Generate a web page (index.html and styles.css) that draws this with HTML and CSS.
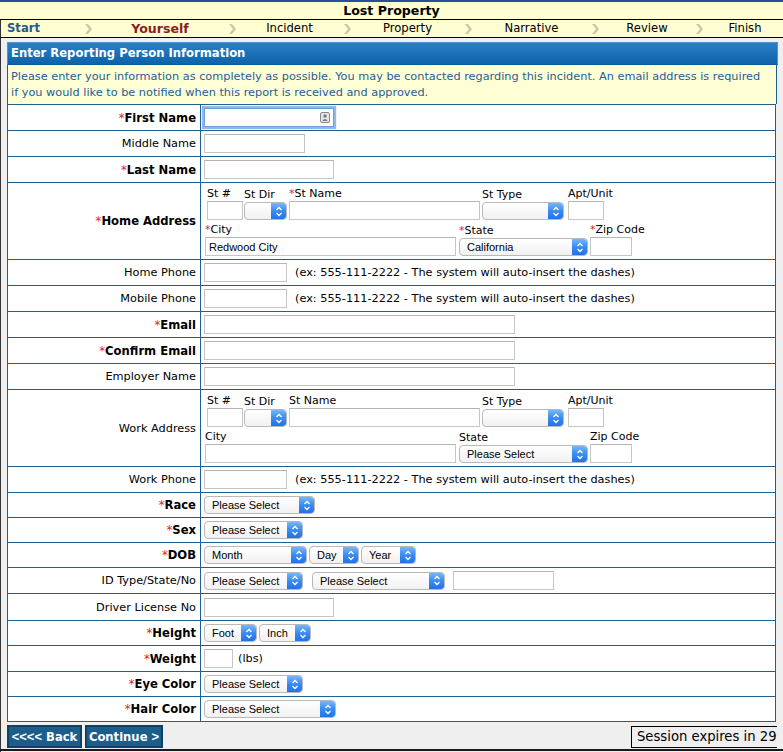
FILE: index.html
```html
<!DOCTYPE html>
<html>
<head>
<meta charset="utf-8">
<title>Lost Property</title>
<link rel="stylesheet" href="styles.css">
</head>
<body>
<div class="top">
  <div class="title">Lost Property</div>
  <div class="steps">
    <div class="step c-start s-done">Start</div>
    <div class="arr"><svg width="7" height="10" viewBox="0 0 7 10"><polygon points="0,0 3,0 7,5 3,10 0,10 4,5" fill="#c9c9a6"/></svg></div>
    <div class="step c-your s-cur">Yourself</div>
    <div class="arr"><svg width="7" height="10" viewBox="0 0 7 10"><polygon points="0,0 3,0 7,5 3,10 0,10 4,5" fill="#c9c9a6"/></svg></div>
    <div class="step c-inc">Incident</div>
    <div class="arr"><svg width="7" height="10" viewBox="0 0 7 10"><polygon points="0,0 3,0 7,5 3,10 0,10 4,5" fill="#c9c9a6"/></svg></div>
    <div class="step c-prop">Property</div>
    <div class="arr"><svg width="7" height="10" viewBox="0 0 7 10"><polygon points="0,0 3,0 7,5 3,10 0,10 4,5" fill="#c9c9a6"/></svg></div>
    <div class="step c-narr">Narrative</div>
    <div class="arr"><svg width="7" height="10" viewBox="0 0 7 10"><polygon points="0,0 3,0 7,5 3,10 0,10 4,5" fill="#c9c9a6"/></svg></div>
    <div class="step c-rev">Review</div>
    <div class="arr"><svg width="7" height="10" viewBox="0 0 7 10"><polygon points="0,0 3,0 7,5 3,10 0,10 4,5" fill="#c9c9a6"/></svg></div>
    <div class="step c-fin">Finish</div>
  </div>
</div>

<div class="main">
  <div class="phead">Enter Reporting Person Information</div>
  <div class="info">Please enter your information as completely as possible. You may be contacted regarding this incident. An email address is required<br>if you would like to be notified when this report is received and approved.</div>

  <table class="form">
    <colgroup><col class="col-l"><col class="col-v"></colgroup>
    <tr>
      <td class="lbl b"><span class="req">*</span>First Name</td>
      <td class="val"><span class="fwrap"><input class="tx w130 focus" type="text"><span class="card"><svg width="10" height="11" viewBox="0 0 10 11"><rect x="0.5" y="0.5" width="9" height="10" rx="1.5" fill="#e6e6e6" stroke="#8a8a8a"/><circle cx="5" cy="4" r="1.7" fill="#7a7a7a"/><path d="M2.3 9 Q5 5.2 7.7 9 Z" fill="#7a7a7a"/></svg></span></span></td>
    </tr>
    <tr>
      <td class="lbl">Middle Name</td>
      <td class="val"><input class="tx w101" type="text"></td>
    </tr>
    <tr>
      <td class="lbl b"><span class="req">*</span>Last Name</td>
      <td class="val"><input class="tx w130" type="text"></td>
    </tr>
    <tr>
      <td class="lbl b"><span class="req">*</span>Home Address</td>
      <td class="val">
        <div class="addr">
          <div class="aline a1">
            <div class="fld"><label>St #</label><input class="tx w36" type="text"></div>
            <div class="fld g1"><label>St Dir</label><span class="sel w43"><select><option></option></select><span class="sbtn"><svg width="8" height="11" viewBox="0 0 8 11"><path d="M1.5 4 L4 1.5 L6.5 4 M1.5 7 L4 9.5 L6.5 7" fill="none" stroke="#fff" stroke-width="1.3"/></svg></span></span></div>
            <div class="fld g2"><label><span class="req">*</span>St Name</label><input class="tx w191" type="text"></div>
            <div class="fld g2"><label>St Type</label><span class="sel w82"><select><option></option></select><span class="sbtn"><svg width="8" height="11" viewBox="0 0 8 11"><path d="M1.5 4 L4 1.5 L6.5 4 M1.5 7 L4 9.5 L6.5 7" fill="none" stroke="#fff" stroke-width="1.3"/></svg></span></span></div>
            <div class="fld g4"><label>Apt/Unit</label><input class="tx w36" type="text"></div>
          </div>
          <div class="aline a2">
            <div class="fld"><label><span class="req">*</span>City</label><input class="tx w251" type="text" value="Redwood City"></div>
            <div class="fld g3"><label><span class="req">*</span>State</label><span class="sel w129"><select><option>California</option></select><span class="sbtn"><svg width="8" height="11" viewBox="0 0 8 11"><path d="M1.5 4 L4 1.5 L6.5 4 M1.5 7 L4 9.5 L6.5 7" fill="none" stroke="#fff" stroke-width="1.3"/></svg></span></span></div>
            <div class="fld g2"><label><span class="req">*</span>Zip Code</label><input class="tx w42" type="text"></div>
          </div>
        </div>
      </td>
    </tr>
    <tr>
      <td class="lbl">Home Phone</td>
      <td class="val"><input class="tx w83" type="text"><span class="hint">(ex: 555-111-2222 - The system will auto-insert the dashes)</span></td>
    </tr>
    <tr>
      <td class="lbl">Mobile Phone</td>
      <td class="val"><input class="tx w83" type="text"><span class="hint">(ex: 555-111-2222 - The system will auto-insert the dashes)</span></td>
    </tr>
    <tr>
      <td class="lbl b"><span class="req">*</span>Email</td>
      <td class="val"><input class="tx w311" type="text"></td>
    </tr>
    <tr>
      <td class="lbl b"><span class="req">*</span>Confirm Email</td>
      <td class="val"><input class="tx w311" type="text"></td>
    </tr>
    <tr>
      <td class="lbl">Employer Name</td>
      <td class="val"><input class="tx w311" type="text"></td>
    </tr>
    <tr>
      <td class="lbl">Work Address</td>
      <td class="val">
        <div class="addr">
          <div class="aline a1">
            <div class="fld"><label>St #</label><input class="tx w36" type="text"></div>
            <div class="fld g1"><label>St Dir</label><span class="sel w43"><select><option></option></select><span class="sbtn"><svg width="8" height="11" viewBox="0 0 8 11"><path d="M1.5 4 L4 1.5 L6.5 4 M1.5 7 L4 9.5 L6.5 7" fill="none" stroke="#fff" stroke-width="1.3"/></svg></span></span></div>
            <div class="fld g2"><label>St Name</label><input class="tx w191" type="text"></div>
            <div class="fld g2"><label>St Type</label><span class="sel w82"><select><option></option></select><span class="sbtn"><svg width="8" height="11" viewBox="0 0 8 11"><path d="M1.5 4 L4 1.5 L6.5 4 M1.5 7 L4 9.5 L6.5 7" fill="none" stroke="#fff" stroke-width="1.3"/></svg></span></span></div>
            <div class="fld g4"><label>Apt/Unit</label><input class="tx w36" type="text"></div>
          </div>
          <div class="aline a2">
            <div class="fld"><label>City</label><input class="tx w251" type="text"></div>
            <div class="fld g3"><label>State</label><span class="sel w129"><select><option>Please Select</option></select><span class="sbtn"><svg width="8" height="11" viewBox="0 0 8 11"><path d="M1.5 4 L4 1.5 L6.5 4 M1.5 7 L4 9.5 L6.5 7" fill="none" stroke="#fff" stroke-width="1.3"/></svg></span></span></div>
            <div class="fld g2"><label>Zip Code</label><input class="tx w42" type="text"></div>
          </div>
        </div>
      </td>
    </tr>
    <tr>
      <td class="lbl">Work Phone</td>
      <td class="val"><input class="tx w83" type="text"><span class="hint">(ex: 555-111-2222 - The system will auto-insert the dashes)</span></td>
    </tr>
    <tr class="srow">
      <td class="lbl b"><span class="req">*</span>Race</td>
      <td class="val"><span class="sel w111"><select><option>Please Select</option></select><span class="sbtn"><svg width="8" height="11" viewBox="0 0 8 11"><path d="M1.5 4 L4 1.5 L6.5 4 M1.5 7 L4 9.5 L6.5 7" fill="none" stroke="#fff" stroke-width="1.3"/></svg></span></span></td>
    </tr>
    <tr class="srow">
      <td class="lbl b"><span class="req">*</span>Sex</td>
      <td class="val"><span class="sel w99"><select><option>Please Select</option></select><span class="sbtn"><svg width="8" height="11" viewBox="0 0 8 11"><path d="M1.5 4 L4 1.5 L6.5 4 M1.5 7 L4 9.5 L6.5 7" fill="none" stroke="#fff" stroke-width="1.3"/></svg></span></span></td>
    </tr>
    <tr class="srow">
      <td class="lbl b"><span class="req">*</span>DOB</td>
      <td class="val"><span class="sel w103"><select><option>Month</option></select><span class="sbtn"><svg width="8" height="11" viewBox="0 0 8 11"><path d="M1.5 4 L4 1.5 L6.5 4 M1.5 7 L4 9.5 L6.5 7" fill="none" stroke="#fff" stroke-width="1.3"/></svg></span></span><span class="sel w50 g2"><select><option>Day</option></select><span class="sbtn"><svg width="8" height="11" viewBox="0 0 8 11"><path d="M1.5 4 L4 1.5 L6.5 4 M1.5 7 L4 9.5 L6.5 7" fill="none" stroke="#fff" stroke-width="1.3"/></svg></span></span><span class="sel w55 g2"><select><option>Year</option></select><span class="sbtn"><svg width="8" height="11" viewBox="0 0 8 11"><path d="M1.5 4 L4 1.5 L6.5 4 M1.5 7 L4 9.5 L6.5 7" fill="none" stroke="#fff" stroke-width="1.3"/></svg></span></span></td>
    </tr>
    <tr>
      <td class="lbl">ID Type/State/No</td>
      <td class="val"><span class="sel w99"><select><option>Please Select</option></select><span class="sbtn"><svg width="8" height="11" viewBox="0 0 8 11"><path d="M1.5 4 L4 1.5 L6.5 4 M1.5 7 L4 9.5 L6.5 7" fill="none" stroke="#fff" stroke-width="1.3"/></svg></span></span><span class="sel w133 g9"><select><option>Please Select</option></select><span class="sbtn"><svg width="8" height="11" viewBox="0 0 8 11"><path d="M1.5 4 L4 1.5 L6.5 4 M1.5 7 L4 9.5 L6.5 7" fill="none" stroke="#fff" stroke-width="1.3"/></svg></span></span><input class="tx w101 g8" type="text"></td>
    </tr>
    <tr class="r27">
      <td class="lbl">Driver License No</td>
      <td class="val"><input class="tx w130" type="text"></td>
    </tr>
    <tr class="srow">
      <td class="lbl b"><span class="req">*</span>Height</td>
      <td class="val"><span class="sel w53"><select><option>Foot</option></select><span class="sbtn"><svg width="8" height="11" viewBox="0 0 8 11"><path d="M1.5 4 L4 1.5 L6.5 4 M1.5 7 L4 9.5 L6.5 7" fill="none" stroke="#fff" stroke-width="1.3"/></svg></span></span><span class="sel w52 g2"><select><option>Inch</option></select><span class="sbtn"><svg width="8" height="11" viewBox="0 0 8 11"><path d="M1.5 4 L4 1.5 L6.5 4 M1.5 7 L4 9.5 L6.5 7" fill="none" stroke="#fff" stroke-width="1.3"/></svg></span></span></td>
    </tr>
    <tr>
      <td class="lbl b"><span class="req">*</span>Weight</td>
      <td class="val"><input class="tx w29" type="text"><span class="lbs">(lbs)</span></td>
    </tr>
    <tr class="srow">
      <td class="lbl b"><span class="req">*</span>Eye Color</td>
      <td class="val"><span class="sel w99"><select><option>Please Select</option></select><span class="sbtn"><svg width="8" height="11" viewBox="0 0 8 11"><path d="M1.5 4 L4 1.5 L6.5 4 M1.5 7 L4 9.5 L6.5 7" fill="none" stroke="#fff" stroke-width="1.3"/></svg></span></span></td>
    </tr>
    <tr class="srow">
      <td class="lbl b"><span class="req">*</span>Hair Color</td>
      <td class="val"><span class="sel w132"><select><option>Please Select</option></select><span class="sbtn"><svg width="8" height="11" viewBox="0 0 8 11"><path d="M1.5 4 L4 1.5 L6.5 4 M1.5 7 L4 9.5 L6.5 7" fill="none" stroke="#fff" stroke-width="1.3"/></svg></span></span></td>
    </tr>
  </table>

  <div class="footer">
    <button class="btn b-back" type="button"><span class="nar">&lt;&lt;&lt;&lt;</span> Back</button>
    <button class="btn b-cont" type="button">Continue <span class="nar">&gt;</span></button>
    <div class="session">Session expires in 29</div>
  </div>
  <div class="bline"></div>
</div>
</body>
</html>
```

FILE: styles.css
```css
html, body {
  margin: 0;
  padding: 0;
  overflow: hidden;
}
body {
  width: 783px;
  height: 752px;
  background: #efefef;
  font-family: "DejaVu Sans", Verdana, sans-serif;
  font-size: 11.3px;
  color: #000;
}

/* ---------- top bar ---------- */
.top {
  background: #fffdd2;
  border-top: 2px solid #2a4d9c;
}
.title {
  height: 17px;
  line-height: 17px;
  text-align: center;
  font-weight: bold;
  font-size: 12.6px;
  border-bottom: 1px solid #000;
}
.steps {
  display: flex;
  height: 17px;
  line-height: 17px;
  border-bottom: 1px solid #000;
  border-left: 1px solid #333;
}
.step {
  text-align: center;
  font-size: 11.6px;
  white-space: nowrap;
}
.s-done {
  color: #1f5b8c;
  font-weight: bold;
  font-size: 11.6px;
  text-align: left;
  padding-left: 6px;
  box-sizing: border-box;
}
.s-cur {
  color: #8b1e1e;
  font-weight: bold;
  font-size: 12.6px;
}
.arr {
  width: 16px;
  display: flex;
  align-items: center;
  justify-content: center;
}
.c-start { width: 79px; }
.c-your { width: 128px; }
.c-inc { width: 99px; }
.c-prop { width: 105px; }
.c-narr { width: 111px; }
.c-rev { width: 88px; }
.c-fin { width: 76px; }

/* ---------- main panel ---------- */
.main {
  border-left: 1px solid #333;
  padding: 4px 0 0 6px;
  height: 714px;
  box-sizing: border-box;
}
.phead {
  width: 771px;
  box-sizing: border-box;
  height: 23px;
  line-height: 21px;
  border: 1px solid #4c93d0;
  border-bottom-color: #0b5a9e;
  background: linear-gradient(#2a80c7, #0d62aa);
  color: #fff;
  font-weight: bold;
  font-size: 11.6px;
  padding-left: 3px;
}
.info {
  width: 770px;
  box-sizing: border-box;
  background: #ffffd6;
  border-left: 1px solid #1d6194;
  border-right: 1px solid #1d6194;
  padding: 4px 3px 3px 3px;
  line-height: 16px;
  color: #1d5e97;
  font-size: 11.3px;
  white-space: nowrap;
}

/* ---------- form table ---------- */
.form {
  width: 768px;
  border-collapse: collapse;
  table-layout: fixed;
  background: #fff;
  border: 1px solid #1d6194;
}
.col-l { width: 193px; }
.col-v { width: 575px; }
.form td {
  border: 1px solid #1d6194;
  height: 25px;
  padding: 0;
  vertical-align: middle;
}
.form tr.srow td { height: 24px; }
.form tr.r27 td { height: 26px; }
.lbl {
  text-align: right;
  padding-right: 4px !important;
  white-space: nowrap;
  font-size: 11.3px;
}
.lbl.b {
  font-weight: bold;
  font-size: 11.6px;
}
.req {
  color: #e41b1b;
  font-weight: normal;
}
.val {
  padding-left: 3px !important;
  white-space: nowrap;
}

/* inputs */
.tx {
  box-sizing: border-box;
  height: 19px;
  border: 1px solid #c6c6c6;
  border-top-color: #b4b4b4;
  background: #fff;
  padding: 0 3px;
  margin: 0;
  font-family: "Liberation Sans", Arial, sans-serif;
  font-size: 11px;
  color: #000;
  vertical-align: middle;
  outline: none;
}
.tx.focus {
  border-color: #6e9fd8;
  box-shadow: 0 0 1px 2px rgba(108, 160, 224, 0.75);
}
.fwrap {
  position: relative;
  display: inline-block;
  vertical-align: middle;
  line-height: 0;
}
.card {
  position: absolute;
  right: 4px;
  top: 4px;
  line-height: 0;
}

/* selects */
.sel {
  display: inline-flex;
  box-sizing: border-box;
  height: 18px;
  border: 1px solid #b9b9b9;
  border-radius: 4px;
  background: linear-gradient(#ffffff, #f1f1f1);
  vertical-align: middle;
  overflow: hidden;
}
.sel select {
  -webkit-appearance: none;
  appearance: none;
  flex: 1;
  min-width: 0;
  width: 100%;
  border: none;
  background: transparent;
  margin: 0;
  padding: 0 0 0 7px;
  height: 16px;
  font-family: "Liberation Sans", Arial, sans-serif;
  font-size: 11px;
  color: #000;
  outline: none;
}
.sbtn {
  flex: 0 0 15px;
  width: 15px;
  height: 16px;
  background: linear-gradient(#74b7fb, #3a8bf2 50%, #1f72ea);
  display: flex;
  align-items: center;
  justify-content: center;
  border-radius: 0 3px 3px 0;
}

/* widths */
.w29 { width: 29px; }
.w36 { width: 36px; }
.w42 { width: 42px; }
.w43 { width: 43px; }
.w50 { width: 50px; }
.w52 { width: 52px; }
.w53 { width: 53px; }
.w55 { width: 55px; }
.w82 { width: 82px; }
.w83 { width: 83px; }
.w99 { width: 99px; }
.w101 { width: 101px; }
.w103 { width: 103px; }
.w111 { width: 111px; }
.w129 { width: 129px; }
.w130 { width: 130px; }
.w132 { width: 132px; }
.w133 { width: 133px; }
.w191 { width: 191px; }
.w251 { width: 251px; }
.w311 { width: 311px; }

.g1 { margin-left: 1px; }
.g2 { margin-left: 2px; }
.g3 { margin-left: 3px; }
.g4 { margin-left: 4px; }
.g8 { margin-left: 8px; }
.g9 { margin-left: 9px; }

.hint {
  margin-left: 8px;
  vertical-align: middle;
}
.lbs {
  margin-left: 5px;
  vertical-align: middle;
}

/* address blocks */
.addr {
  padding: 4px 0 3px;
}
.aline {
  display: flex;
  align-items: flex-end;
}
.a1 { margin-left: 3px; }
.a2 { margin-left: 1px; margin-top: 3px; }
.fld {
  display: flex;
  flex-direction: column;
  align-items: flex-start;
}
.fld label {
  line-height: 14px;
  height: 14px;
  font-size: 11px;
  white-space: nowrap;
}

/* footer */
.footer {
  display: flex;
  align-items: flex-start;
  padding-top: 3px;
}
.btn {
  flex-shrink: 0;
  box-sizing: border-box;
  height: 23px;
  margin: 0;
  padding: 0;
  background: #1c5d8a;
  border: 2px solid #0f4166;
  color: #fff;
  font-family: "DejaVu Sans", Verdana, sans-serif;
  font-weight: bold;
  font-size: 11.6px;
  text-align: center;
  white-space: nowrap;
}
.nar {
  font-family: "Liberation Sans", Arial, sans-serif;
  font-size: 13px;
}
.b-back { width: 75px; }
.b-cont { width: 78px; margin-left: 3px; }
.session {
  flex-shrink: 0;
  margin-left: 468px;
  margin-top: 1px;
  height: 22px;
  box-sizing: border-box;
  border: 1px solid #000;
  border-right: none;
  padding: 0 0 0 5px;
  line-height: 20px;
  font-size: 13.2px;
  white-space: nowrap;
}
.bline {
  margin-top: 1px;
  margin-left: -7px;
  height: 2px;
  background: #1a1a1a;
}
```
